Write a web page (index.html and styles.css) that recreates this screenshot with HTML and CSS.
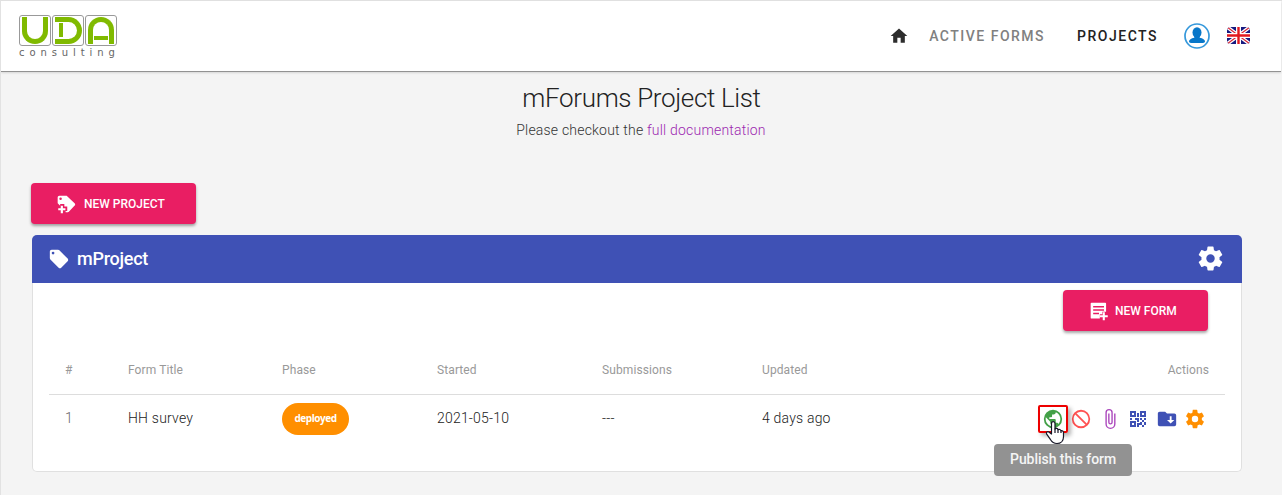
FILE: index.html
```html
<!DOCTYPE html>
<html lang="en">
<head>
<meta charset="utf-8">
<title>mForums Project List</title>
<link rel="stylesheet" href="styles.css">
</head>
<body>
<svg class="defs" width="0" height="0">
  <symbol id="gear" viewBox="0 0 24 24"><path d="M12 15.5A3.5 3.5 0 0 1 8.5 12 3.5 3.5 0 0 1 12 8.500a3.500 3.500 0 0 1 3.500 3.500 3.500 3.500 0 0 1-3.500 3.500m7.430-2.530c.04-.32.07-.64.07-.97s-.03-.66-.07-1l2.110-1.630c.19-.15.24-.42.12-.64l-2-3.460c-.12-.22-.39-.31-.61-.22l-2.490 1c-.52-.39-1.060-.73-1.690-.98l-.37-2.650A.506.506 0 0 0 14 2h-4c-.25 0-.46.18-.5.42l-.37 2.650c-.63.25-1.170.59-1.690.98l-2.490-1c-.22-.09-.49 0-.61.22l-2 3.460c-.13.22-.07.49.12.64L4.570 11c-.04.34-.07.67-.07 1s.03.65.07.97l-2.110 1.660c-.19.15-.25.42-.12.64l2 3.460c.12.22.39.3.61.22l2.490-1.010c.52.4 1.060.74 1.690.99l.37 2.650c.04.24.25.42.5.42h4c.25 0 .46-.18.5-.42l.37-2.650c.63-.26 1.170-.59 1.690-.99l2.490 1.010c.22.08.49 0 .61-.22l2-3.460c.12-.22.07-.49-.12-.64l-2.110-1.660Z"/></symbol>
  <symbol id="tag" viewBox="0 0 24 24"><path fill-rule="evenodd" d="M5.500 7A1.500 1.500 0 0 1 4 5.500 1.500 1.500 0 0 1 5.500 4 1.500 1.500 0 0 1 7 5.500 1.500 1.500 0 0 1 5.500 7m15.910 4.580-9-9C12.050 2.220 11.550 2 11 2H4c-1.110 0-2 .89-2 2v7c0 .55.22 1.050.59 1.410l8.990 9c.37.36.87.59 1.420.59s1.050-.23 1.410-.59l7-7c.37-.36.59-.86.59-1.410 0-.56-.23-1.060-.59-1.420Z"/></symbol>
</svg>
<div class="page">
  <header class="topbar">
    <div class="logo" aria-label="UDA consulting">
      <div class="logo-tiles">
        <span class="tile"><i class="mark mark-u"></i></span>
        <span class="tile"><i class="mark mark-d"></i></span>
        <span class="tile"><i class="mark mark-a"></i></span>
      </div>
      <span class="logo-word">consulting</span>
    </div>
    <nav class="nav">
      <svg class="home" viewBox="0 0 24 24"><path d="M10 20v-6h4v6h5v-8h3L12 3 2 12h3v8h5Z"/></svg>
      <a class="nav-link muted">ACTIVE FORMS</a>
      <a class="nav-link">PROJECTS</a>
      <svg class="user" viewBox="0 0 26 26"><circle cx="13" cy="13" r="12" fill="#fff" stroke="#3598db" stroke-width="1.700"/><ellipse cx="13" cy="9.500" rx="4.500" ry="5.300"/><path d="M10.300 12.500h5.400v2.200c3.200.7 5.300 1.900 5.300 3.600 0 1-.8 1.600-2 1.600H7c-1.200 0-2-.6-2-1.600 0-1.700 2.100-2.900 5.300-3.600Z"/></svg>
      <svg class="flag" viewBox="0 0 23 17">
        <clipPath id="flag-shape"><rect width="23" height="17" rx="3.500"/></clipPath>
        <g clip-path="url(#flag-shape)"><path fill="#171a80" d="M0 0h23v17H0z"/><path stroke="#fff" stroke-width="3.800" d="m0 0 23 17M23 0 0 17"/><path stroke="#d92636" stroke-width="1.200" d="m0 0 23 17M23 0 0 17"/><path stroke="#fff" stroke-width="5" d="M11.500 0v17M0 8.500h23"/><path stroke="#e3191e" stroke-width="2.400" d="M11.500 0v17M0 8.500h23"/></g>
      </svg>
    </nav>
  </header>

  <main class="content">
    <h1 class="title">mForums Project List</h1>
    <p class="subtitle">Please checkout the <a>full documentation</a></p>
    <button class="btn btn-project">
      <svg viewBox="0 0 24 24"><path fill-rule="evenodd" d="M5.500 7.200a1.500 1.500 0 1 0 0-3 1.500 1.500 0 0 0 0 3M4 2h8c.55 0 1.050.2 1.410.59l8.900 8.500c.4.37.69.87.69 1.410 0 .55-.2 1.050-.59 1.410l-7 7.500a2 2 0 0 1-1.410.59h-2.500v-1.500h2v-5.500h-3.500v-3H5v2l-3-3V4c0-1.100.9-2 2-2Z"/><path d="M5.700 14h2.600v3h3v2.600h-3V23H5.700v-3.400h-3V17h3z"/></svg>
      <span>NEW PROJECT</span>
    </button>

    <section class="card">
      <div class="card-head">
        <svg class="head-tag"><use href="#tag"/></svg>
        <h2>mProject</h2>
        <svg class="head-gear"><use href="#gear"/></svg>
      </div>
      <div class="card-body">
        <button class="btn btn-form">
          <svg viewBox="0 0 24 24"><path fill-rule="evenodd" d="M3 2h16.500a1 1 0 0 1 1 1v10H16v3h-3v5H3a1 1 0 0 1-1-1V3a1 1 0 0 1 1-1m2 4v1.800h13V6zm0 4v1.800h13V10zm0 4v1.800h7V14z"/><path d="M16.500 13.500h2.500V17h3.500v2.500H19V23h-2.500v-3.500H13V17h3.500z"/></svg>
          <span>NEW FORM</span>
        </button>
        <div class="table">
          <div class="row row-head">
            <span>#</span><span>Form Title</span><span>Phase</span><span>Started</span><span>Submissions</span><span>Updated</span><span class="last">Actions</span>
          </div>
          <div class="row row-data">
            <span class="cell index">1</span><span class="cell">HH survey</span><span class="phase"><b class="pill">deployed</b></span><span class="cell">2021-05-10</span><span class="cell">---</span><span class="cell">4 days ago</span>
            <div class="actions">
              <div class="publish">
                <svg class="green" viewBox="0 0 24 24"><path d="M17.900 17.390c-.26-.8-1.010-1.390-1.900-1.390h-1v-3a1 1 0 0 0-1-1H8v-2h2a1 1 0 0 0 1-1V7h2a2 2 0 0 0 2-2v-.41a7.984 7.984 0 0 1 2.900 12.800M11 19.930c-3.950-.49-7-3.850-7-7.930 0-.62.080-1.220.21-1.790L9 15v1a2 2 0 0 0 2 2m1-16A10 10 0 1 0 12 22 10 10 0 0 0 12 2Z"/></svg>
                <svg class="cursor" viewBox="0 0 20 25"><path d="M6.500 14V3.500c0-2.600 3.500-2.600 3.500 0V9c1-1.100 2.800-.7 3 .7 1.200-.7 2.700-.1 2.900 1 1.400-.5 2.600.4 2.600 1.800v4.200c0 3.800-2.500 6.800-6.500 6.800-3.600 0-5.100-1.500-6.800-4.300l-3.500-5.100c-1-1.900 1-3 2.500-1.900Z" fill="#fff" stroke="#151525" stroke-width="1.200" stroke-linejoin="round"/><path d="M10 8.500V13m3-3.500V13m3-2.500V13" fill="none" stroke="#151525" stroke-width="1.200"/></svg>
                <div class="tooltip">Publish this form</div>
              </div>
              <svg class="red" viewBox="0 0 24 24"><path d="M12 2a10 10 0 1 1 0 20 10 10 0 0 1 0-20m0 2a8 8 0 0 0-4.900 1.700l11.200 11.200A8 8 0 0 0 12 4m0 16a8 8 0 0 0 4.900-1.700L5.700 7.100A8 8 0 0 0 12 20Z"/></svg>
              <svg class="purple" viewBox="0 0 24 24"><path d="M16.500 6v11.500a4 4 0 0 1-4 4 4 4 0 0 1-4-4V5A2.500 2.500 0 0 1 11 2.500 2.500 2.500 0 0 1 13.500 5v10.500a1 1 0 0 1-2 0V6H10v9.500a2.500 2.500 0 0 0 5 0V5a4 4 0 0 0-8 0v12.500a5.500 5.500 0 0 0 11 0V6h-1.500Z"/></svg>
              <svg class="indigo" viewBox="1 1 22 22"><path d="M4 4h6v6H4V4m16 0v6h-6V4h6m-6 11h2v-2h-2v-2h2v2h2v-2h2v2h-2v2h2v3h-2v2h-2v-2h-3v2h-2v-4h3v-1m2 0v3h2v-3h-2M4 20v-6h6v6H4M6 6v2h2V6H6m10 0v2h2V6h-2M6 16v2h2v-2H6m-2-5h2v2H4v-2m5 0h4v4h-2v-2H9v-2m2-5h2v4h-2V6"/></svg>
              <svg class="indigo" viewBox="0 0 24 24"><path fill-rule="evenodd" d="M4 4h6l2 2h8a2 2 0 0 1 2 2v10a2 2 0 0 1-2 2H4a2 2 0 0 1-2-2V6c0-1.100.9-2 2-2m11 5v4h-3l4 4 4-4h-3V9z"/></svg>
              <svg class="orange"><use href="#gear"/></svg>
            </div>
          </div>
        </div>
      </div>
    </section>
  </main>
</div>
</body>
</html>
```
FILE: styles.css
```css
* { box-sizing: border-box; }
body { margin: 0; background: #f4f4f4; font-family: Roboto, "Liberation Sans", sans-serif; color: #333; }
.defs { position: absolute; }
.page { height: 495px; overflow: hidden; border-top: 1px solid #e0e0e0; border-left: 1px solid #e2e2e2; }
svg { display: block; fill: currentColor; flex: none; }
h1, h2, p { margin: 0; }

.topbar { height: 71px; margin-right: 1px; padding: 14px 31px 0 18px; display: flex; justify-content: space-between; background: #fff; border-bottom: 1px solid #929292; box-shadow: 0 1px 2px rgba(0,0,0,.12); }
.logo { width: 98px; }
.logo-tiles { display: flex; gap: 1px; }
.tile { width: 32px; height: 31px; padding: 1px; border: 1px solid #999; border-radius: 3px; }
.mark { display: block; height: 27px; margin: 0 1px; border: 5px solid #80ba00; position: relative; }
.mark-u { border-top: 0; border-radius: 0 0 14px 14px; }
.mark-d { margin: 0 0 0 1px; border-left: 0; border-radius: 0 14px 14px 0; }
.mark-d::after { content: ""; position: absolute; left: 4px; top: 1px; width: 4px; height: 14px; background: #80ba00; }
.mark-a { border-bottom: 0; border-radius: 14px 14px 0 0; }
.mark-a::after { content: ""; position: absolute; left: 1px; bottom: 4px; width: 14px; height: 4px; background: #80ba00; }
.logo-word { display: block; margin-top: 1px; font: 10px/12px "DejaVu Sans", sans-serif; letter-spacing: 4.900px; color: #666; white-space: nowrap; }

.nav { display: flex; align-items: center; height: 41px; }
.home { width: 20px; height: 20px; color: #2d2d2d; }
.nav-link { font-size: 14px; font-weight: 500; letter-spacing: 1.500px; color: #222; margin-left: 32px; }
.nav-link.muted { color: #808080; margin-left: 20px; }
.user { width: 26px; height: 26px; margin-left: 26px; color: #0877c9; }
.flag { width: 23px; height: 17px; margin-left: 17px; }

.content { padding: 0 40px 0 30px; }
.title { margin: 11px -10px 0 0; text-align: center; font-size: 26px; line-height: 30px; font-weight: 300; letter-spacing: -.35px; color: #222; }
.subtitle { margin: 7px -9px 0 0; text-align: center; font-size: 14px; line-height: 20px; font-weight: 300; letter-spacing: .2px; }
.subtitle a { color: #9c27b0; }
.btn { display: flex; align-items: center; height: 41px; padding: 0; border: 0; border-radius: 4px; background: #e91e63; color: #fff; font: 500 12px Roboto, sans-serif; box-shadow: 0 2px 3px rgba(0,0,0,.35); }
.btn svg { width: 20px; height: 20px; }
.btn-project { width: 165px; margin-top: 43px; padding-left: 25px; gap: 8px; }
.btn-form { width: 145px; margin-left: auto; padding-left: 26px; gap: 6px; }

.card { margin: 11px 0 0 1px; height: 237px; border: 1px solid #e0e0e0; border-top: 0; border-radius: 5px; background: #fff; }
.card-head { height: 48px; margin: 0 -1px; padding: 0 17px 0 16px; display: flex; align-items: center; background: #3f51b5; color: #fff; border-radius: 5px 5px 0 0; }
.head-tag { width: 22px; height: 22px; margin-right: 7px; }
.card-head h2 { flex: 1; font-size: 18px; line-height: 22px; font-weight: 500; letter-spacing: -.25px; }
.head-gear { width: 29px; height: 29px; margin-top: -1px; }
.card-body { padding: 7px 16px 0; }
.card-body .btn-form { margin-right: 17px; }
.table { margin-top: 15px; }
.row { display: grid; grid-template-columns: 63px 154px 155px 165px 160px 1fr auto; align-items: center; padding: 0 16px; }
.row-head { height: 49px; border-bottom: 1px solid #ddd; font-size: 12px; color: #999; letter-spacing: .1px; }
.row-data { height: 47px; font-size: 14px; font-weight: 300; letter-spacing: .2px; color: #222; }
.cell { padding-bottom: 2px; }
.index { color: #666; }
.phase { padding-top: 1px; }
.pill { display: block; width: 67px; height: 32px; border-radius: 16px; background: #ff8f00; color: #fff; font: 700 10px/31px "Open Sans", sans-serif; letter-spacing: -.45px; text-align: center; }
.actions { display: flex; align-items: center; gap: 6.400px; margin-right: 3px; }
.actions svg { width: 22px; height: 22px; }
.publish { position: relative; width: 30px; height: 28px; margin: 0 -4px; display: grid; place-items: center; border: 2px solid #ed0000; box-shadow: 3px 3px 4px rgba(0,0,0,.3); border-radius: 2px; }
.actions .cursor { position: absolute; left: 5px; top: 13px; width: 20px; height: 25px; z-index: 2; }
.tooltip { position: absolute; left: -46px; top: 37px; width: 138px; height: 32px; border-radius: 4px; background: #929292; color: #f5f5f5; font-size: 14px; line-height: 31px; font-weight: 500; letter-spacing: -.05px; text-align: center; white-space: nowrap; }
.green { color: #43a047; }
.red { color: #ff5252; }
.purple { color: #ab47bc; }
.indigo { color: #3f51b5; }
.orange { color: #ff8f00; }
```
